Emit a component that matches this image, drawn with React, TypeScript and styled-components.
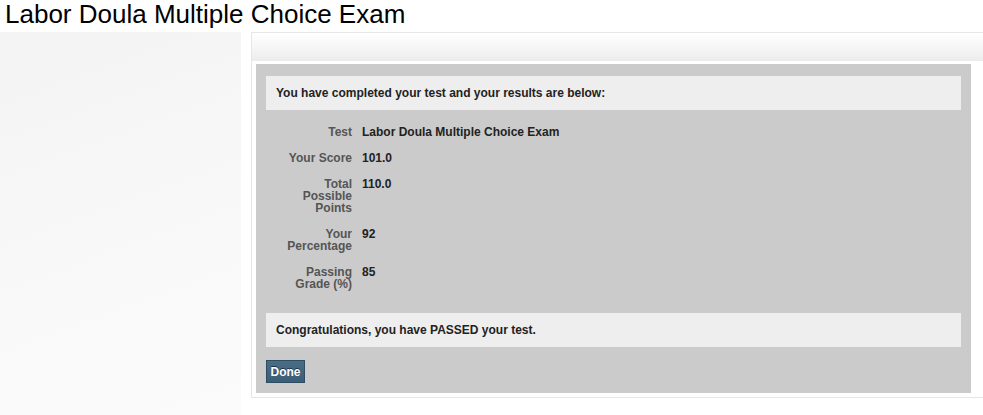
import React from "react";
import styled, { createGlobalStyle } from "styled-components";

const Global = createGlobalStyle`
  html, body { margin: 0; padding: 0; background: #ffffff; }
  body { font-family: "Liberation Sans", Arial, Helvetica, sans-serif; overflow: hidden; }
`;

const Page = styled.div`
  width: 983px;
  height: 415px;
  display: flex;
  flex-direction: column;
`;

const Title = styled.h1`
  margin: 0;
  height: 32px;
  padding: 0 0 0 5px;
  font-size: 26px;
  line-height: 28px;
  font-weight: normal;
  color: #000;
`;

const Body = styled.div`
  flex: 1;
  display: flex;
  gap: 10px;
  align-items: flex-start;
`;

const Sidebar = styled.div`
  width: 241px;
  height: 383px;
  background: linear-gradient(160deg, #f3f3f3 0%, #f8f8f8 50%, #fbfbfb 100%);
  flex-shrink: 0;
`;

const Panel = styled.div`
  flex: 1;
  border: 1px solid #e6e6e6;
  border-right: none;
  padding: 0 0 4px 0;
`;

const PanelHeader = styled.div`
  height: 28px;
  background: linear-gradient(to bottom, #ffffff 0%, #f6f6f6 50%, #ececec 100%);
  margin-bottom: 3px;
`;

const ResultBox = styled.div`
  margin: 0 12px 0 4px;
  background: #cbcbcb;
  padding: 12px 10px 10px 10px;
`;

const Notice = styled.div`
  background: #eeeeee;
  padding: 10px 10px;
  height: 34px;
  box-sizing: border-box;
  font-size: 12px;
  line-height: 14px;
  font-weight: bold;
  color: #222;
`;

const Details = styled.div`
  display: grid;
  grid-template-columns: 86px 1fr;
  column-gap: 10px;
  row-gap: 14px;
  padding: 16px 0 23px 0;
  font-size: 12px;
  line-height: 12px;
  font-weight: bold;
`;

const Label = styled.div`
  text-align: right;
  color: #555;
  padding-left: 14px;
`;

const Value = styled.div`
  color: #222;
`;

const DoneButton = styled.button`
  margin-top: 13px;
  display: block;
  height: 23px;
  width: 39px;
  padding: 0;
  border: 1px solid #2e4d63;
  background: linear-gradient(to bottom, #4a6d86 0%, #3b5d76 100%);
  color: #fff;
  font-family: "Liberation Sans", Arial, Helvetica, sans-serif;
  font-size: 12px;
  font-weight: bold;
  text-shadow: 0 -1px 0 #1e3344;
  cursor: pointer;
`;

const rows: [string, string][] = [
  ["Test", "Labor Doula Multiple Choice Exam"],
  ["Your Score", "101.0"],
  ["Total Possible Points", "110.0"],
  ["Your Percentage", "92"],
  ["Passing Grade (%)", "85"],
];

export default function App() {
  return (
    <Page>
      <Global />
      <Title>Labor Doula Multiple Choice Exam</Title>
      <Body>
        <Sidebar />
        <Panel>
          <PanelHeader />
          <ResultBox>
            <Notice>You have completed your test and your results are below:</Notice>
            <Details>
              {rows.map(([l, v]) => (
                <React.Fragment key={l}>
                  <Label>{l}</Label>
                  <Value>{v}</Value>
                </React.Fragment>
              ))}
            </Details>
            <Notice>Congratulations, you have PASSED your test.</Notice>
            <DoneButton>Done</DoneButton>
          </ResultBox>
        </Panel>
      </Body>
    </Page>
  );
}
